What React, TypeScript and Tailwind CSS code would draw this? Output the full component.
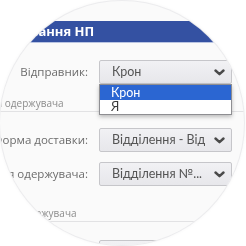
import React from "react";

const font = { fontFamily: '"Open Sans", "Noto Sans", sans-serif' };
const valueFont = { fontFamily: 'Lato, "Open Sans", sans-serif' };

function Chevron() {
  return (
    <svg width="11" height="7" viewBox="0 0 11 7" className="shrink-0">
      <polyline points="1.5,1.5 5.5,5.2 9.5,1.5" fill="none" stroke="#4a4a4a" strokeWidth="2.4" strokeLinecap="round" strokeLinejoin="round" />
    </svg>
  );
}

function Select({ value, children }: { value: string; children?: React.ReactNode }) {
  return (
    <div className="relative ml-[11px] w-[133px] h-[24px]">
      <div className="flex items-center h-full pl-[12px] pr-[6px] border border-[#c6c6ca] rounded-[2px] bg-gradient-to-b from-[#f1f1f4] to-[#e7e7eb]">
        <span className="flex-1 mr-[9px] text-[12.5px] text-[#555] whitespace-nowrap overflow-hidden leading-none" style={valueFont}>{value}</span>
        <Chevron />
      </div>
      {children}
    </div>
  );
}

function Row({ label, value, className, children }: { label: string; value: string; className: string; children?: React.ReactNode }) {
  return (
    <div className={`flex items-center ${className}`}>
      <div className="w-[88px] shrink-0 flex justify-end text-[11.5px] text-[#6c6c6c] whitespace-nowrap">{label}</div>
      <Select value={value}>{children}</Select>
    </div>
  );
}

function Section({ title, className }: { title: string; className: string }) {
  return (
    <div className={`border-b border-[#e2e2e4] ${className}`}>
      <div className="ml-[-19px] text-[10px] leading-[16px] text-[#8c8c8c] whitespace-nowrap">{title}</div>
    </div>
  );
}

export default function App() {
  return (
    <div className="w-[246px] h-[246px] bg-white overflow-hidden" style={font}>
      <div className="mt-[1px] w-[244px] h-[244px] rounded-full overflow-hidden bg-[#fafafa] ring-1 ring-[#ececee] shadow-[0_0_4px_rgba(0,0,0,0.06)]">
        <div className="blur-[0.3px]">
          <div className="mt-[20px] h-[22px] bg-[#3451a2] border-b border-[#b9c4e2] flex items-center">
            <span className="ml-[-31px] text-[13px] font-bold text-white whitespace-nowrap">Налаштування НП</span>
          </div>

          <Row label="Відправник:" value="Крон" className="mt-[17px] relative z-10">
            <div className="absolute left-0 top-full w-full bg-white border border-[#8e8e92] shadow-[0_2px_4px_rgba(0,0,0,0.25)]" style={valueFont}>
              <div className="h-[15px] pl-[11px] bg-[#2b66d2] text-white text-[12.5px] leading-[15px]">Крон</div>
              <div className="h-[14px] pl-[11px] text-[#3a3a3a] text-[12.5px] leading-[14px]">Я</div>
            </div>
          </Row>

          <Section title="Дані одержувача" className="mt-[11px]" />

          <Row label="Форма доставки:" value="Відділення - Відділення" className="mt-[16px]" />
          <Row label="Відділення одержувача:" value="Відділення №..." className="mt-[10px]" />

          <Section title="Адреса одержувача" className="mt-[19px]" />

          <Row label="Телефон:" value="" className="mt-[18px]" />
        </div>
      </div>
    </div>
  );
}
